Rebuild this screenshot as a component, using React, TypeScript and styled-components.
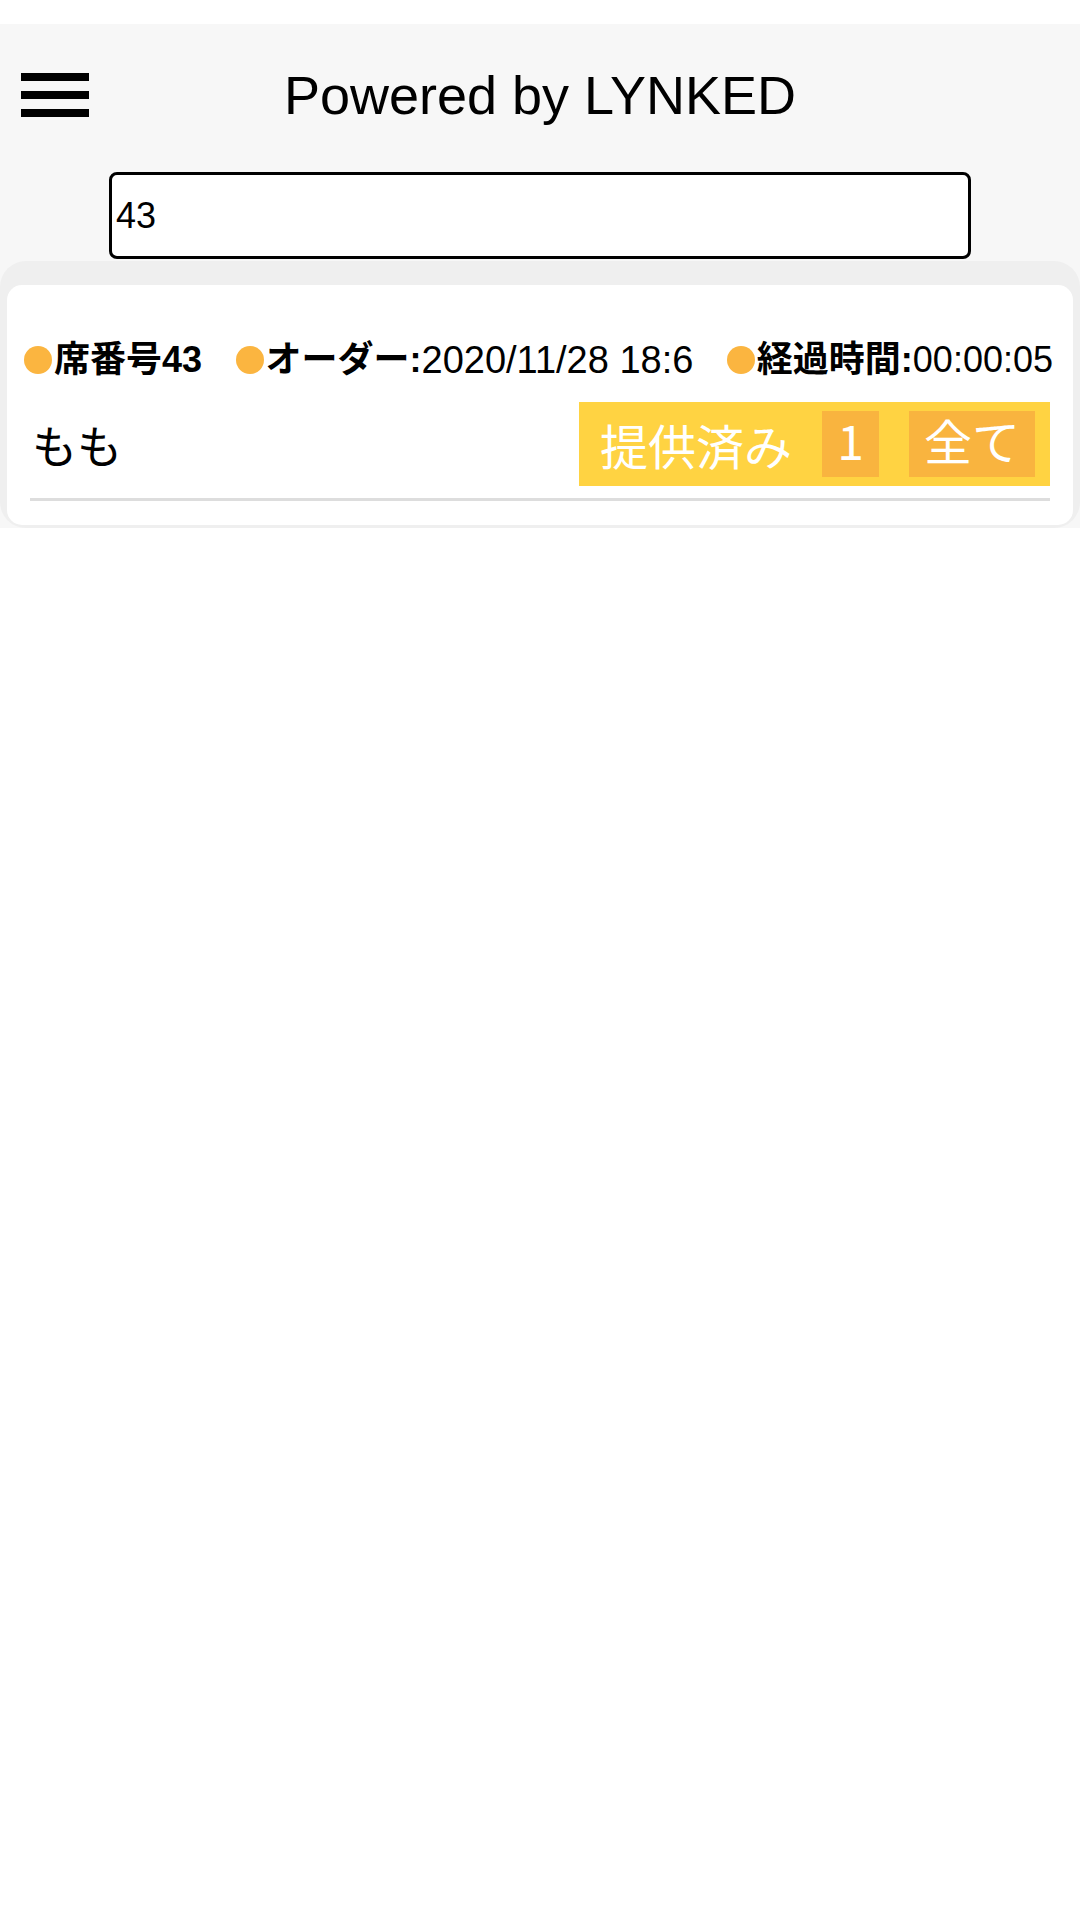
import styled, { createGlobalStyle } from "styled-components";

const GlobalStyle = createGlobalStyle`
  body {
    margin: 0;
    background: #ffffff;
    font-family: "Liberation Sans", "Noto Sans CJK JP", sans-serif;
    color: #000000;
  }
`;

const Page = styled.div`
  padding-top: 24px;
  background: #ffffff;
  min-height: 1896px;
`;

const Top = styled.div`
  background: #f7f7f7;
`;

const Bar = styled.header`
  display: grid;
  grid-template-columns: 1fr auto 1fr;
  align-items: center;
  padding: 41px 21px 0;
`;

const MenuButton = styled.div`
  display: flex;
  flex-direction: column;
  gap: 10px;
  width: 68px;
`;

const MenuLine = styled.span`
  display: block;
  height: 8px;
  background: #000000;
`;

const Title = styled.h1`
  margin: 0;
  font-size: 54px;
  font-weight: 400;
  line-height: 60px;
  white-space: nowrap;
`;

const SearchInput = styled.input`
  display: block;
  box-sizing: border-box;
  width: 862px;
  height: 87px;
  margin: 47px auto 0;
  padding: 0 4px;
  border: 3px solid #000000;
  border-radius: 8px;
  background: #ffffff;
  font-family: "Liberation Sans", sans-serif;
  font-size: 36px;
  color: #000000;
  outline: none;
`;

const List = styled.section`
  margin-top: 2px;
  padding: 24px 7px 3px;
  background: #efefef;
  border-radius: 26px;
`;

const Card = styled.article`
  padding: 55px 23px 24px;
  background: #ffffff;
  border-radius: 15px;
`;

const InfoRow = styled.div`
  display: flex;
  justify-content: space-between;
  align-items: center;
  height: 40px;
  margin: 0 -3px 0 -6px;
  font-size: 36px;
  line-height: 40px;
  white-space: nowrap;
`;

const Info = styled.div`
  display: flex;
  align-items: center;
`;

const Dot = styled.span`
  width: 28px;
  height: 28px;
  margin-right: 2px;
  border-radius: 50%;
  background: #fbb540;
`;

const Label = styled.span`
  font-weight: 700;
`;

const Value = styled.span<{ $large?: boolean }>`
  font-weight: 400;
  font-size: ${({ $large }) => ($large ? "38px" : "36px")};
`;

const ItemRow = styled.div`
  display: flex;
  justify-content: space-between;
  align-items: center;
  margin-top: 22px;
`;

const ItemName = styled.span`
  font-size: 45px;
  line-height: 50px;
  padding: 10px 0 0 2px;
`;

const ServeButton = styled.button`
  display: flex;
  align-items: center;
  height: 84px;
  padding: 0 15px 0 21px;
  border: none;
  background: #ffd342;
  color: #ffffff;
  font-family: "Noto Sans CJK JP", "Liberation Sans", sans-serif;
  font-size: 48px;
  line-height: 1;
  cursor: pointer;
`;

const Count = styled.span<{ $wide?: boolean }>`
  display: flex;
  align-items: center;
  justify-content: center;
  box-sizing: border-box;
  height: 66px;
  min-width: ${({ $wide }) => ($wide ? "126px" : "57px")};
  margin-left: 30px;
  padding: 0 15px 10px;
  background: #f9b43f;
`;

const Divider = styled.hr`
  margin: 12px 0 0;
  height: 3px;
  border: none;
  background: #dddddd;
`;

export default function App() {
  return (
    <>
      <GlobalStyle />
      <Page>
        <Top>
          <Bar>
            <MenuButton>
              <MenuLine />
              <MenuLine />
              <MenuLine />
            </MenuButton>
            <Title>Powered by LYNKED</Title>
          </Bar>
          <SearchInput defaultValue="43" />
          <List>
            <Card>
              <InfoRow>
                <Info>
                  <Dot />
                  <Label>席番号43</Label>
                </Info>
                <Info>
                  <Dot />
                  <Label>オーダー:</Label>
                  <Value $large>2020/11/28 18:6</Value>
                </Info>
                <Info>
                  <Dot />
                  <Label>経過時間:</Label>
                  <Value>00:00:05</Value>
                </Info>
              </InfoRow>
              <ItemRow>
                <ItemName>もも</ItemName>
                <ServeButton>
                  提供済み
                  <Count>1</Count>
                  <Count $wide>全て</Count>
                </ServeButton>
              </ItemRow>
              <Divider />
            </Card>
          </List>
        </Top>
      </Page>
    </>
  );
}
